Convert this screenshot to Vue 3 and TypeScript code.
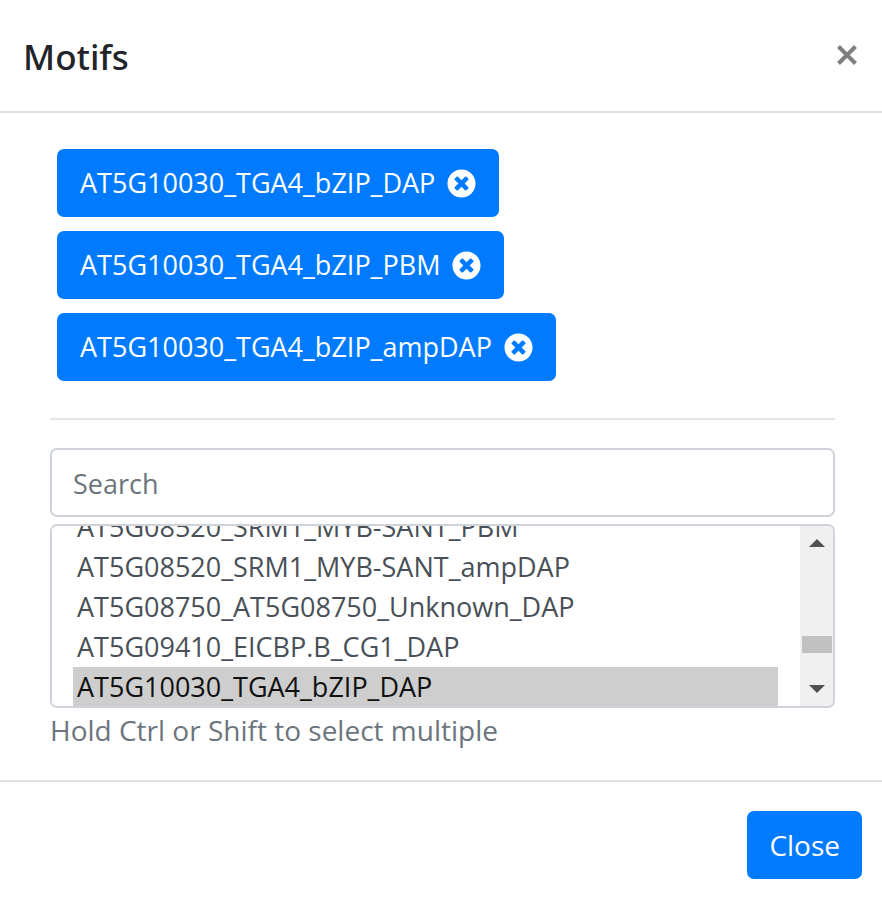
<script setup lang="ts">
import { onMounted, ref } from 'vue'

const options: string[] = [
  'AT5G08520_SRM1_MYB-SANT_PBM',
  'AT5G08520_SRM1_MYB-SANT_ampDAP',
  'AT5G08750_AT5G08750_Unknown_DAP',
  'AT5G09410_EICBP.B_CG1_DAP',
  'AT5G10030_TGA4_bZIP_DAP',
]

const chips = ref<string[]>([
  'AT5G10030_TGA4_bZIP_DAP',
  'AT5G10030_TGA4_bZIP_PBM',
  'AT5G10030_TGA4_bZIP_ampDAP',
])
const selected = ref<string[]>(['AT5G10030_TGA4_bZIP_DAP'])
const query = ref('')
const list = ref<HTMLSelectElement | null>(null)

function removeChip(name: string): void {
  chips.value = chips.value.filter((c) => c !== name)
}

function scrollList(delta: number): void {
  if (list.value) list.value.scrollTop += delta
}

// Bring the selected motif into view.
onMounted(() => scrollList(40))
</script>

<template>
  <section class="modal" role="dialog" aria-labelledby="modal-title">
    <header class="modal-header">
      <h1 id="modal-title" class="title">Motifs</h1>
      <button type="button" class="dismiss" aria-label="Close">
        <svg viewBox="0 0 22 22" aria-hidden="true">
          <path d="M2.500 2.500 19.500 19.500M19.500 2.500 2.500 19.500" />
        </svg>
      </button>
    </header>

    <div class="modal-body">
      <div class="chips">
        <button v-for="chip in chips" :key="chip" type="button" class="btn chip" @click="removeChip(chip)">
          <span>{{ chip }}</span>
          <svg class="chip-icon" viewBox="0 0 512 512" aria-hidden="true">
            <path
              d="M256 8C119 8 8 119 8 256s111 248 248 248 248-111 248-248S393 8 256 8zm121.600 313.100c4.700 4.700 4.700 12.300 0 17L338 377.600c-4.700 4.700-12.300 4.700-17 0L256 312l-65.100 65.600c-4.700 4.700-12.300 4.700-17 0L134.400 338c-4.700-4.700-4.700-12.300 0-17l65.600-65-65.600-65.100c-4.700-4.700-4.700-12.300 0-17l39.600-39.600c4.700-4.700 12.300-4.700 17 0l65 65.700 65.100-65.600c4.700-4.700 12.300-4.700 17 0l39.600 39.600c4.700 4.700 4.700 12.300 0 17L312 256l65.600 65.100z"
            />
          </svg>
        </button>
      </div>

      <hr class="rule" />

      <input v-model="query" class="search" type="text" placeholder="Search" aria-label="Search" />

      <div class="listbox">
        <select ref="list" v-model="selected" class="list" multiple size="4" aria-label="Motifs" aria-describedby="list-help">
          <option v-for="name in options" :key="name" :value="name">{{ name }}</option>
        </select>
        <div class="scrollbar">
          <button type="button" class="arrow" aria-label="Scroll up" @click="scrollList(-40)">
            <svg viewBox="0 0 16 8" aria-hidden="true"><path d="M0 8 8 0l8 8z" /></svg>
          </button>
          <div class="track"><div class="thumb"></div></div>
          <button type="button" class="arrow" aria-label="Scroll down" @click="scrollList(40)">
            <svg viewBox="0 0 16 8" aria-hidden="true"><path d="M0 0h16L8 8z" /></svg>
          </button>
        </div>
      </div>
      <p id="list-help" class="help">Hold Ctrl or Shift to select multiple</p>
    </div>

    <footer class="modal-footer">
      <button type="button" class="btn">Close</button>
    </footer>
  </section>
</template>

<style>
body {
  background: #fff;
}
</style>

<style scoped>
.modal,
.modal * {
  box-sizing: border-box;
}
.modal {
  font-family: 'Open Sans', 'Noto Sans', sans-serif;
  font-size: 28px;
  line-height: 40px;
  color: #212529;
}
button,
input,
select {
  font: inherit;
  margin: 0;
}
.modal-header {
  display: flex;
  align-items: flex-start;
  justify-content: space-between;
  padding: 31px 24px 28px 23px;
  border-bottom: 2px solid #dee2e6;
}
.title {
  margin: 0;
  font-family: 'Noto Sans', 'Open Sans', sans-serif;
  font-size: 35px;
  line-height: 52px;
  font-weight: 500;
}
.dismiss {
  display: flex;
  padding: 13px 0;
  border: 0;
  background: none;
  cursor: pointer;
}
.dismiss svg {
  width: 22px;
  height: 22px;
  fill: none;
  stroke: #7f7f7f;
  stroke-width: 4;
}
.modal-body {
  padding: 36px 47px 30px 50px;
}
.chips {
  display: flex;
  flex-direction: column;
  align-items: flex-start;
  gap: 14px;
  padding: 0 7px;
}
.btn {
  display: flex;
  align-items: center;
  padding: 14px 22px;
  border: 0;
  border-radius: 7px;
  background: #007bff;
  color: #fff;
  cursor: pointer;
}
.chip {
  gap: 12px;
  padding: 14px 23px;
  font-size: 27px;
}
.chip-icon {
  width: 29px;
  height: 29px;
  fill: currentColor;
}
.rule {
  margin: 37px 0 28px;
  border: 0;
  border-top: 2px solid #e5e5e5;
}
.search {
  display: block;
  width: 100%;
  height: 69px;
  padding: 15px 21px 13px;
  border: 2px solid #ced4da;
  border-radius: 7px;
  background: #fff;
  color: #495057;
  font-size: 27px;
}
.search::placeholder {
  color: #6c757d;
  opacity: 1;
}
.listbox {
  display: flex;
  height: 184px;
  margin-top: 7px;
  border: 2px solid #ced4da;
  border-radius: 7px;
  overflow: hidden;
}
.list {
  flex: 1;
  min-width: 0;
  height: 181px;
  padding: 0 22px 0 21px;
  border: 0;
  outline: 0;
  background: #fff;
  color: #495057;
  font-size: 27px;
  scrollbar-width: none;
}
.list option {
  height: 40px;
  padding: 1px 4px 0;
  line-height: 40px;
}
.scrollbar {
  display: flex;
  flex-direction: column;
  width: 33px;
  background: #f0f0f0;
}
.arrow {
  display: flex;
  align-items: center;
  justify-content: center;
  height: 34px;
  padding: 0;
  border: 0;
  background: none;
}
.arrow svg {
  width: 16px;
  height: 8px;
  fill: #505050;
}
.track {
  flex: 1;
  padding: 76px 1px 0 2px;
}
.thumb {
  height: 17px;
  background: #c1c1c1;
}
.help {
  margin: 2px 0 0;
  color: #6c757d;
}
.modal-footer {
  display: flex;
  justify-content: flex-end;
  padding: 29px 20px 19px;
  border-top: 2px solid #dee2e6;
}
</style>
